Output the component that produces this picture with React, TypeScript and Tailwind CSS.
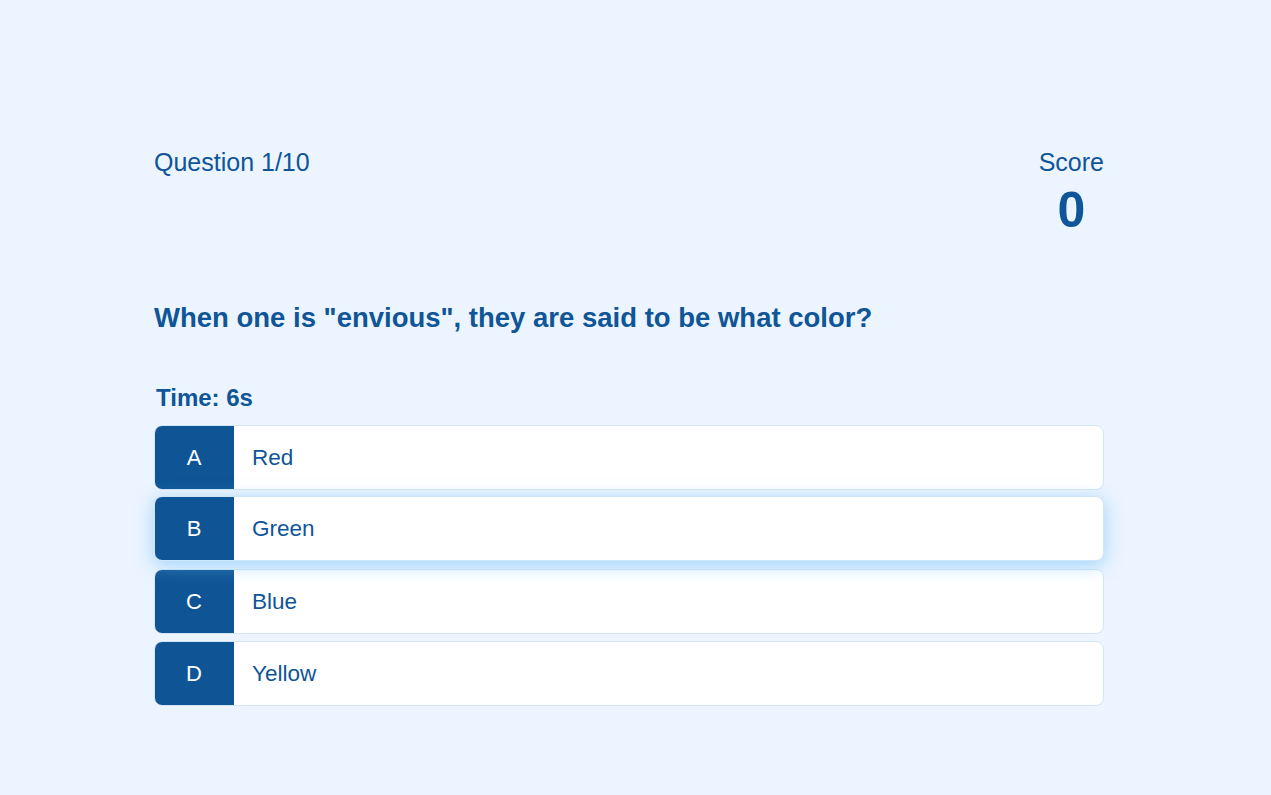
import React from "react";

const options = [
  { letter: "A", text: "Red" },
  { letter: "B", text: "Green" },
  { letter: "C", text: "Blue" },
  { letter: "D", text: "Yellow" },
];

export default function App() {
  return (
    <div
      className="min-h-screen w-full bg-[#ebf4ff] text-[#0f5597]"
      style={{ fontFamily: '"Liberation Sans", Arial, sans-serif' }}
    >
      <div className="ml-[154px] w-[950px] pt-[146px]">
        <div className="flex items-start justify-between">
          <div className="text-[25px] leading-[32px]">Question 1/10</div>
          <div className="flex flex-col items-center">
            <div className="text-[25px] leading-[32px]">Score</div>
            <div className="mt-[7px] text-[50px] font-bold leading-none">0</div>
          </div>
        </div>
        <h2 className="mt-[65px] text-[27.5px] font-bold leading-[36px]">
          When one is "envious", they are said to be what color?
        </h2>
        <div className="mt-[46px] pl-[2px] text-[24px] font-bold leading-[32px]">Time: 6s</div>
        <div className="mt-[11px] flex flex-col gap-[7px]">
          {options.map((o) => {
            const active = o.letter === "B";
            return (
              <div
                key={o.letter}
                className={
                  active
                    ? "flex h-[65px] -translate-y-[1px] overflow-hidden rounded-lg border border-[#cfe5f8] bg-white shadow-[0_4px_18px_rgba(110,190,245,0.6)]"
                    : "flex h-[65px] overflow-hidden rounded-lg border border-[#d2e6f8] bg-white"
                }
              >
                <div className="-my-[1px] -ml-[1px] flex w-[80px] items-center justify-center rounded-l-lg bg-[#0f5595] text-[22px] text-white">
                  {o.letter}
                </div>
                <div className="flex items-center pl-[18px] text-[22.5px]">{o.text}</div>
              </div>
            );
          })}
        </div>
      </div>
    </div>
  );
}
